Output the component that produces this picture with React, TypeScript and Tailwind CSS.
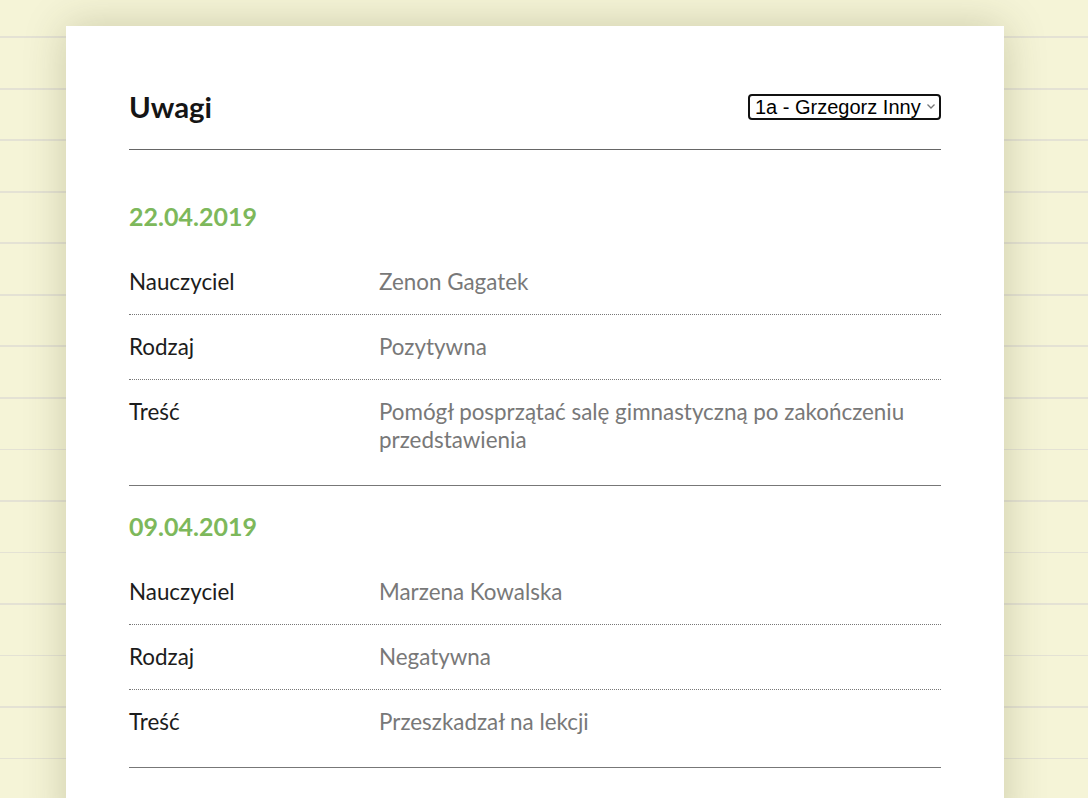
type Note = {
  date: string;
  teacher: string;
  kind: string;
  content: string;
};

const notes: Note[] = [
  {
    date: "22.04.2019",
    teacher: "Zenon Gagatek",
    kind: "Pozytywna",
    content: "Pomógł posprzątać salę gimnastyczną po zakończeniu przedstawienia",
  },
  {
    date: "09.04.2019",
    teacher: "Marzena Kowalska",
    kind: "Negatywna",
    content: "Przeszkadzał na lekcji",
  },
];

function Row({ label, value, last }: { label: string; value: string; last?: boolean }) {
  return (
    <div
      className={
        "flex py-[18px] text-[22.4px] leading-[28px] " +
        (last ? "" : "border-b border-dotted border-[#777]")
      }
    >
      <div className="w-[250px] shrink-0 text-[#1c1c1c]">{label}</div>
      <div className="flex-1 text-[#787878]">{value}</div>
    </div>
  );
}

function App() {
  return (
    <div
      className="min-h-screen overflow-hidden bg-[#f5f4d7] font-['Lato','Open_Sans',sans-serif]"
      style={{
        backgroundImage:
          "repeating-linear-gradient(to bottom, transparent 0px, transparent 36.5px, #e4e2d4 36.5px, #e4e2d4 38.5px, transparent 38.5px, transparent 51.5px)",
      }}
    >
      <div className="ml-[66px] mt-[26px] w-[938px] bg-white px-[63px] pt-[63px] pb-16 shadow-[0_0_40px_rgba(60,60,0,0.22)]">
        <div className="flex h-[36px] items-center justify-between border-b border-[#666] pb-6 box-content">
          <h1 className="text-[29.4px] font-bold leading-[36px] text-[#151515]">Uwagi</h1>
          <div className="relative">
            <select className="h-[26px] w-[193px] appearance-none rounded-[4px] border-2 border-[#111] bg-white pl-[5px] pr-[12px] font-['Liberation_Sans',Arial,sans-serif] text-[20px] leading-[22px] text-black">
              <option>1a - Grzegorz Inny</option>
            </select>
            <svg
              className="pointer-events-none absolute right-[5px] top-[9px]"
              width="10"
              height="7"
              viewBox="0 0 10 7"
            >
              <path d="M1.5 1.5 L5 5 L8.5 1.5" fill="none" stroke="#777" strokeWidth="1.3" />
            </svg>
          </div>
        </div>

        {notes.map((note, i) => (
          <section
            key={note.date}
            className={
              "border-b border-[#777] pb-[13px] " + (i === 0 ? "pt-[50px]" : "pt-6")
            }
          >
            <h2 className="mb-[18px] text-[25px] font-bold leading-[32px] text-[#7db85b]">
              {note.date}
            </h2>
            <Row label="Nauczyciel" value={note.teacher} />
            <Row label="Rodzaj" value={note.kind} />
            <Row label="Treść" value={note.content} last />
          </section>
        ))}
      </div>
    </div>
  );
}

export default App;
